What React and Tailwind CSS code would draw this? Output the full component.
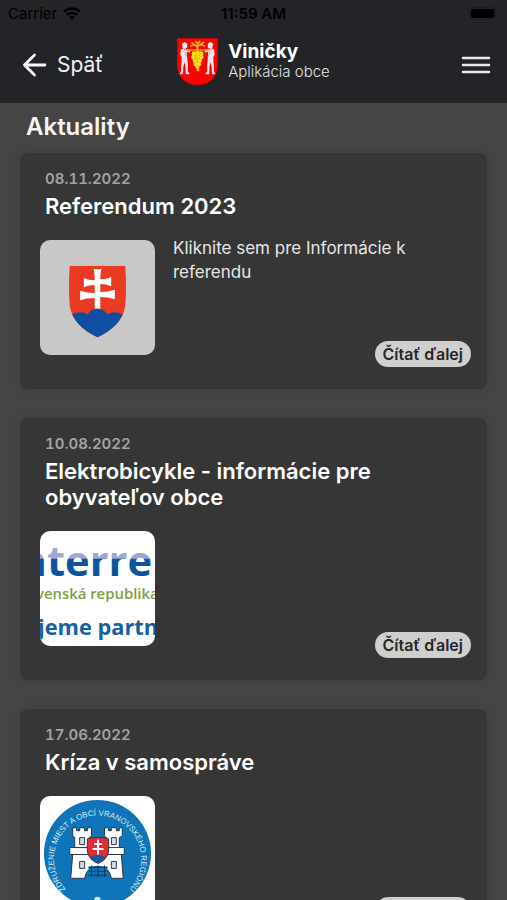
import { useId } from 'react'

function WifiIcon() {
  return (
    <svg viewBox="0 0 18 14" className="w-[18px] h-[14px]" aria-hidden="true">
      <path d="M9 13.2 6.2 10.2a4 4 0 0 1 5.6 0z" fill="#000" />
      <path d="M3.9 7.9a7.2 7.2 0 0 1 10.2 0" fill="none" stroke="#000" strokeWidth="2.3" />
      <path d="M1 4.8a11.3 11.3 0 0 1 16 0" fill="none" stroke="#000" strokeWidth="2.3" />
    </svg>
  )
}

function BatteryIcon() {
  return (
    <svg viewBox="0 0 30 14" className="w-[30px] h-[14px]" aria-hidden="true">
      <rect x="0.5" y="0.5" width="26" height="12" rx="4" fill="none" stroke="#1b1c1e" />
      <rect x="2" y="2" width="23" height="9" rx="2.5" fill="#000" />
      <path d="M28 4.5q1.8 2 0 4z" fill="#1b1c1e" />
    </svg>
  )
}

function Carrier() {
  return (
    <>
      <circle cx="7.8" cy="8" r="2.5" />
      <path d="M5 5.8 7.500 4l3 1.800-.5 1.200H5z" />
      <path d="M4 11.500 7 10l3.200 1.300 3.500 1.500-.8 1.800-3-.6.3 6.500.8 7-.3 6 1.800 1.600-.3 1.100H8.800L8.500 29 7.500 24l-1.200 5-.2 5.800-.6 1.500H3l-.2-1.200 1.200-1.300.2-6.500 1-7.300-2-3.500z" />
    </>
  )
}

function VillageCrest() {
  return (
    <svg viewBox="0 0 41 48" className="w-[41px] h-[48px]" aria-hidden="true">
      <path d="M.5.5h40v27c0 11-8 19.500-20 19.500S.5 38.500.5 27.500z" fill="#fb0303" stroke="#b80d0d" />
      <g fill="#e6e8ee">
        <Carrier />
      </g>
      <g transform="translate(41 0) scale(-1 1)" fill="#e6e8ee">
        <Carrier />
      </g>
      <path d="M4.500 18v5M36.500 18v5M8 14l2 5M33 14l-2 5" stroke="#a9949c" strokeWidth=".8" />
      {/* pole, leaves and grapes */}
      <path d="M7 11.800 14 12h13l7-.2" fill="none" stroke="#f2a31c" strokeWidth="1.500" />
      <path d="M20.500 12V5.500M20.500 9l-6-4.500M20.500 8.500 27 4M17 7l-4 1M24 7l4 1M20.500 6l-2-3M20.500 6l2.500-3" fill="none" stroke="#e9c515" strokeWidth="1.600" />
      <g fill="#f0de17">
        <circle cx="17" cy="15.500" r="2.300" />
        <circle cx="20.500" cy="15" r="2.300" />
        <circle cx="24" cy="15.500" r="2.300" />
        <circle cx="16.500" cy="19" r="2.300" />
        <circle cx="20.500" cy="18.700" r="2.300" />
        <circle cx="24.300" cy="19" r="2.300" />
        <circle cx="18" cy="22.500" r="2.400" />
        <circle cx="22.500" cy="22.500" r="2.400" />
        <circle cx="18.500" cy="26" r="2.200" />
        <circle cx="22" cy="26" r="2.200" />
        <circle cx="20.500" cy="29" r="2" />
        <circle cx="21" cy="32" r="1.400" />
      </g>
      <g fill="#c9a312">
        <circle cx="18.800" cy="17" r=".6" />
        <circle cx="22.400" cy="17" r=".6" />
        <circle cx="18.500" cy="20.800" r=".6" />
        <circle cx="22.400" cy="20.600" r=".6" />
        <circle cx="20.300" cy="24.300" r=".6" />
        <circle cx="20.300" cy="27.500" r=".5" />
      </g>
    </svg>
  )
}

function StateEmblem() {
  const clip = useId()
  return (
    <svg viewBox="0 0 116 116" className="w-full h-full" role="img" aria-label="Slovenský znak">
      <defs>
        <clipPath id={clip}>
          <path d="M30 26h56c1 14 1 28 0 40-2 15-13 25-28 32-15-7-26-17-28-32-1-12-1-26 0-40z" />
        </clipPath>
      </defs>
      <rect width="116" height="116" fill="#c8c8c6" />
      <g clipPath={`url(#${clip})`}>
        <rect x="25" y="20" width="66" height="80" fill="#ea3a22" />
        <path
          d="M54 29q4 1.200 8 0-1.200 5-1.200 10.500 6 0 11-2.200v9.400q-5-2.200-11-2.200v8q8 0 14.700-2.200v9.400q-7-2.200-14.700-2.200V74h-5.600V58.500q-8 0-14.700 2.200v-9.400q7 2.200 14.700 2.200v-8q-6 0-11 2.200v-9.400q5 2.200 11 2.200Q55.200 34 54 29z"
          fill="#fff"
        />
        <path d="M28 82q3-9 13-9 4 0 7 2.500Q51 69 58 69t10 6.500q3-2.500 7-2.500 10 0 13 9v20H28z" fill="#104f9f" />
      </g>
    </svg>
  )
}

function InterregBanner() {
  const tone = useId()
  return (
    <svg viewBox="0 0 116 116" className="w-full h-full" aria-hidden="true">
      <defs>
        <linearGradient id={tone} gradientUnits="userSpaceOnUse" x1="0" y1="0" x2="0" y2="50">
          <stop offset="0.550" stopColor="#9da6d6" />
          <stop offset="0.570" stopColor="#0d539f" />
        </linearGradient>
      </defs>
      <rect width="116" height="116" fill="#fff" />
      <g className="font-['Open_Sans',sans-serif]">
        <text x="113" y="45" textAnchor="end" fontSize="42" fontWeight="700" fill={`url(#${tone})`}>nterre</text>
        <text x="-4" y="69" fontSize="15" fontWeight="600" fill="#7d9f42">venská republika</text>
        <text x="-2" y="105" fontSize="22" fontWeight="700" fill="#17609f">jeme partn</text>
      </g>
    </svg>
  )
}

function RegionSeal() {
  const arc = useId()
  return (
    <svg viewBox="0 0 116 116" className="w-full h-full" aria-hidden="true">
      <defs>
        <path id={arc} d="M26 94A44 44 0 1 1 90 94" />
      </defs>
      <rect width="116" height="116" fill="#fff" />
      <circle cx="58" cy="58" r="54" fill="#0f75b8" />
      <text fontSize="8" fill="#d8ebf7" className="font-['Liberation_Sans',sans-serif]">
        <textPath href={`#${arc}`} startOffset="50%" textAnchor="middle">ZDRUŽENIE MIEST A OBCÍ VRANOVSKÉHO REGIÓNU</textPath>
      </text>
      <g fill="#fff" stroke="#263746" strokeWidth="1">
        <path d="M33 32h4v3h3v-3h5v3h3v-3h4v8l-2 2v10h17V42l-2-2v-8h4v3h3v-3h5v3h3v-3h3v8l-3 2v10h5v7h-3l2 24H72q-2-12-13.500-12T45 83H31l2-24h-3v-7h5V42l-2-2z" />
        <path d="M40 42h5v7h-5zM72 42h5v7h-5zM40 66h5v7h-5zM72 66h5v7h-5z" fill="#d7dce0" />
        <path d="M31 59h20M67 59h17M35 52h16M67 52h13" fill="none" />
      </g>
      <path d="M49 71h19v9H49z" fill="#0f75b8" />
      <path d="M49 72h19M49 76h19M49 80h19M52 70v12M58.500 70v12M65 70v12" stroke="#16384f" strokeWidth="1" />
      <path d="M48 43q5-1 10.500-1.500Q64 42 69 43q1 13-1 17-3 6-9.500 8-6.500-2-9.500-8-2-4-1-17z" fill="#e52b33" stroke="#263746" />
      <path d="M58.500 44v17M54.500 48.500h8M53 53.500h11" stroke="#fff" strokeWidth="2" />
      <path d="M51 62q2-2.500 4.500-1.500 3-3 6 0Q64 59.500 66 62q-2.500 3.500-7.500 5.500Q53.500 65.500 51 62z" fill="#15589c" />
      <path d="M55 103q3-3 6 0v5h-6z" fill="#d8ebf7" />
    </svg>
  )
}

const news = [
  {
    date: '08.11.2022',
    title: 'Referendum 2023',
    text: 'Kliknite sem pre Informácie k referendu',
    Picture: StateEmblem
  },
  {
    date: '10.08.2022',
    title: 'Elektrobicykle - informácie pre obyvateľov obce',
    text: '',
    Picture: InterregBanner
  },
  {
    date: '17.06.2022',
    title: 'Kríza v samospráve',
    text: '',
    Picture: RegionSeal
  }
]

function NewsCard({ item }) {
  const { date, title, text, Picture } = item
  return (
    <article className="rounded-lg bg-[#363636] pt-4 pb-[22px] pl-5 pr-4 shadow-[0_0_12px_rgba(0,0,0,0.12)]">
      <div className="px-[5px]">
        <time className="block text-[15px] leading-5 font-semibold text-[#a3a3a3] tabular-nums">{date}</time>
        <h2 className="mt-1 text-[22px] leading-[26px] font-semibold text-white">{title}</h2>
      </div>
      <div className="mt-[17px] flex gap-[18px]">
        <div className="mt-1 mb-3 size-[115px] shrink-0 overflow-hidden rounded-[10px]">
          <Picture />
        </div>
        <div className="flex flex-1 flex-col justify-between">
          <p className="pr-8 text-[17px] leading-6 text-[#e6e6e6]">{text}</p>
          <button type="button" className="self-end rounded-full bg-[#cfcfcf] px-2 text-base leading-[26px] font-semibold text-[#262626]">
            Čítať ďalej
          </button>
        </div>
      </div>
    </article>
  )
}

export default function App() {
  return (
    <div className="flex h-screen flex-col overflow-hidden bg-[#454545] font-['Inter',sans-serif]">
      <header className="shrink-0 bg-[#232427]">
        {/* status bar */}
        <div className="grid h-7 grid-cols-[1fr_auto_1fr] items-center px-2 text-[15px] text-black">
          <div className="flex items-center gap-1.5">
            <span>Carrier</span>
            <WifiIcon />
          </div>
          <span className="font-semibold">11:59 AM</span>
          <div className="flex justify-end">
            <BatteryIcon />
          </div>
        </div>

        <div className="grid h-[75px] grid-cols-[1fr_auto_1fr] items-center px-4 pb-0.5">
          <button type="button" className="flex items-center gap-2.5 pl-1.5 text-[21px] leading-7 text-[#f2f2f2]">
            <svg viewBox="0 0 25 24" className="h-6 w-[25px]" fill="none" stroke="#fff" strokeWidth="2.800" strokeLinecap="round" strokeLinejoin="round" aria-hidden="true">
              <path d="M12.500 2 2.500 12l10 10M2.500 12H23" />
            </svg>
            Späť
          </button>
          <div className="flex items-center gap-2.5 pb-1.5">
            <VillageCrest />
            <div>
              <div className="text-[19px] leading-5 font-bold text-white">Viničky</div>
              <div className="text-[15px] leading-5 font-light text-[#e0e0e0]">Aplikácia obce</div>
            </div>
          </div>
          <button type="button" aria-label="Menu" className="justify-self-end">
            <svg viewBox="0 0 30 20" className="h-5 w-[30px]" stroke="#e8e8ec" strokeWidth="2.600" strokeLinecap="round" aria-hidden="true">
              <path d="M2 3h26M2 10h26M2 17h26" />
            </svg>
          </button>
        </div>
      </header>

      <main className="flex-1 overflow-y-auto px-5 pt-2 pb-8 [scrollbar-width:none]">
        <h1 className="mb-2.5 pl-1.5 text-2xl leading-8 font-semibold text-[#f5f5f5]">Aktuality</h1>
        <div className="flex flex-col gap-[29px]">
          {news.map(item => (
            <NewsCard key={item.date} item={item} />
          ))}
        </div>
      </main>
    </div>
  )
}
